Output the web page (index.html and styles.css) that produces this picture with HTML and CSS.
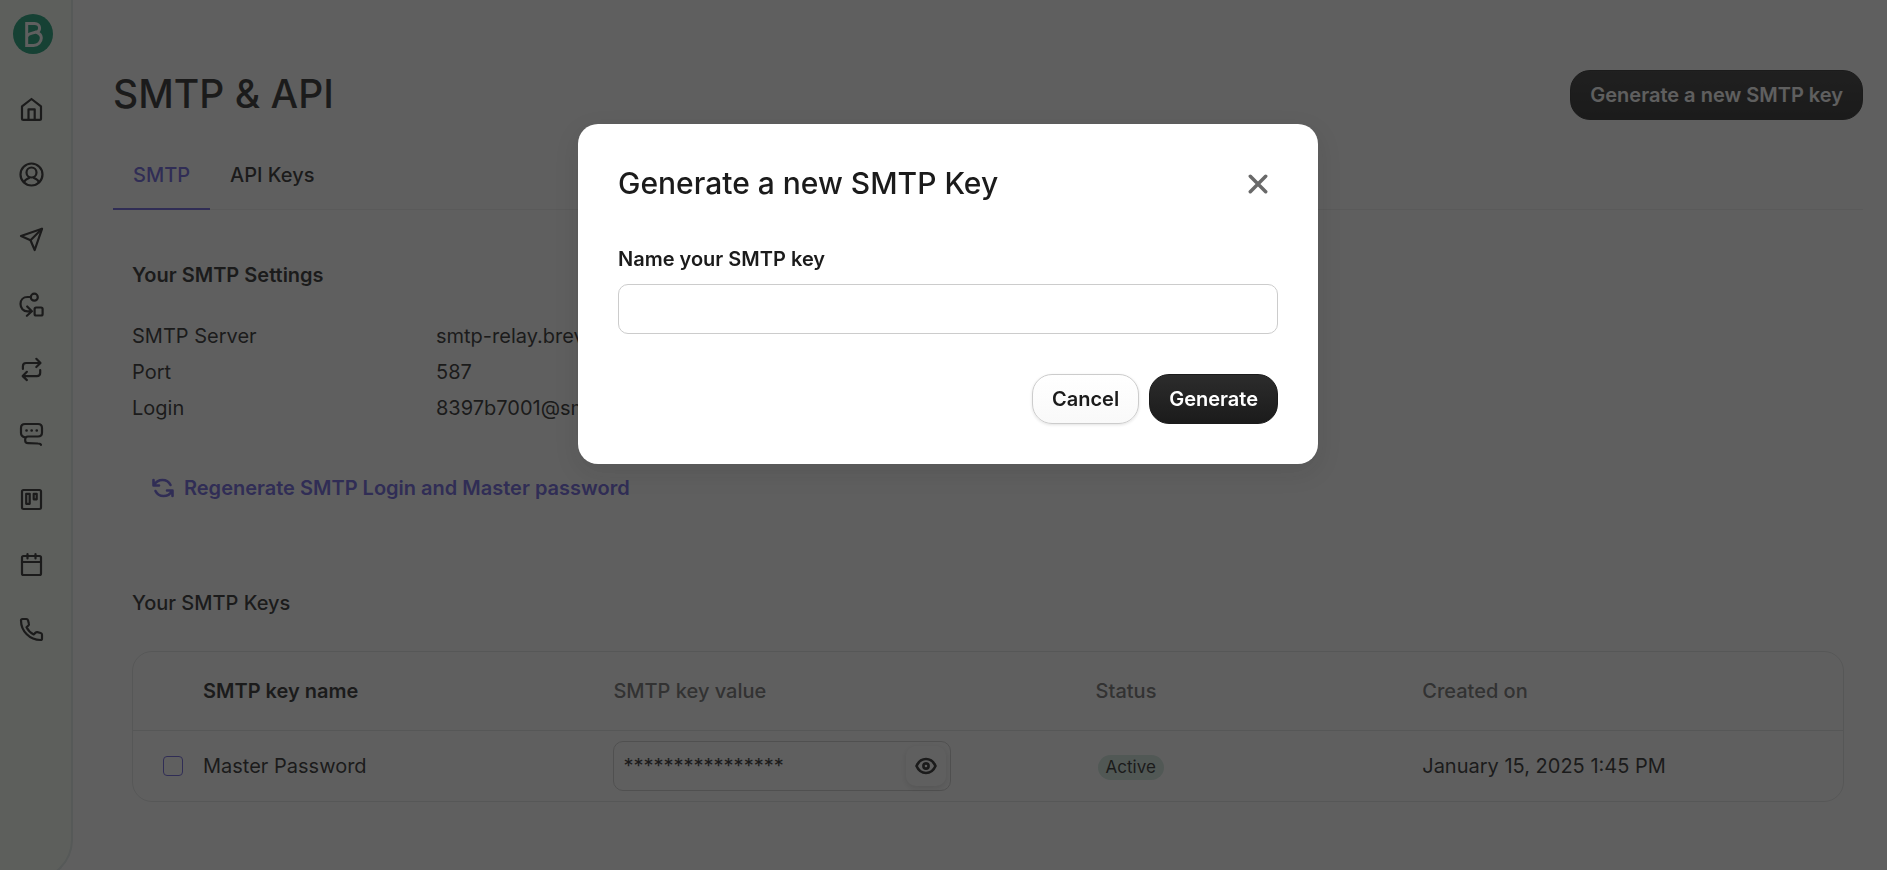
FILE: index.html
```html
<!DOCTYPE html>
<html lang="en">
<head>
    <meta charset="UTF-8">
    <meta name="viewport" content="width=device-width, initial-scale=1.0">
    <title>SMTP &amp; API</title>
    <link rel="stylesheet" href="styles.css">
</head>
<body>
    <div class="app">
        <nav class="sidebar" aria-label="Main">
            <a class="logo" href="#" aria-label="Dashboard">
                <svg viewBox="0 0 40 40" width="40" height="40">
                    <circle cx="20" cy="20" r="20" fill="#0b996e" stroke="none"/>
                    <path d="M13.700 31.400V9.600h7.800c3.200 0 5.100 1.900 5.100 4.500 0 1.900-.9 3.300-2.600 4.400 2.700 1 4.300 3 4.300 5.600 0 4-3.300 7.300-7.800 7.300zM13.800 22.600c.8-2.300 2.400-2.900 5.400-3.500 2.200-.4 3.800-1 4.900-1.700" fill="none" stroke="#fff" stroke-width="3" stroke-linecap="butt" stroke-linejoin="miter"/>
                </svg>
            </a>
            <a class="nav-item" href="#" aria-label="Home">
                <svg viewBox="0 0 25 25"><path d="M3 9.300v12.200c0 .8.6 1.400 1.400 1.400h16.200c.8 0 1.400-.6 1.400-1.400V9.300L12.500 2z"/><path d="M9.500 22.500V12.300h6.200v10.200"/></svg>
            </a>
            <a class="nav-item" href="#" aria-label="Contacts">
                <svg viewBox="0 0 25 25"><circle cx="12.500" cy="12.500" r="11"/><circle cx="12.500" cy="10.500" r="5"/><path d="M4.800 20.200c1.300-2.800 3.300-3.600 5.700-4.500M20.200 20.200c-1.300-2.800-3.300-3.600-5.700-4.500"/></svg>
            </a>
            <a class="nav-item" href="#" aria-label="Campaigns">
                <svg viewBox="0 0 25 25"><path d="M23 1.800L2 9l9.500 4.200L15.700 23z"/><path d="M23 1.800L11.500 13.200"/></svg>
            </a>
            <a class="nav-item" href="#" aria-label="Automations">
                <svg viewBox="0 0 25 25"><circle cx="15.300" cy="5.200" r="3.500"/><path d="M11.800 5H8.500C4.300 5 1.500 8 1.500 12s2.800 7.300 7 7.300H12M8.200 14.500l4.700 4.800-5 4.500"/><rect x="15.600" y="15.500" width="8" height="8" rx="1.500"/></svg>
            </a>
            <a class="nav-item" href="#" aria-label="Transactional">
                <svg viewBox="0 0 25 25"><path d="M3.900 12V9.300c0-2 1.300-3.300 3.300-3.300H21M17.300 1.800L21.500 6l-4.200 4M21.200 13v2.800c0 2-1.300 3.300-3.300 3.300H4M7.900 14.800l-4.200 4.300 4.200 4"/></svg>
            </a>
            <a class="nav-item" href="#" aria-label="Conversations">
                <svg viewBox="0 0 25 25"><path d="M6 15.300C3.500 14.800 2 13.300 2 11V6c0-2.500 1.500-4 4-4h13c2.500 0 4 1.500 4 4v4.500c0 2.500-1.500 4-4 4H9c-2.300 0-2.800 1-2.800 2.800v1.200c0 1.900.8 2.700 2.800 2.700l10 .3c1.700 0 2.700.3 3 1.400"/><path d="M7.500 8.500h.1M12.600 8.500h.1M17.700 8.500h.1" stroke-width="2.600"/></svg>
            </a>
            <a class="nav-item" href="#" aria-label="Deals">
                <svg viewBox="0 0 25 25"><rect x="3" y="3" width="19" height="19" rx="1.500"/><rect x="7.200" y="6.800" width="3.500" height="10"/><rect x="14.700" y="6.800" width="3" height="5.500"/></svg>
            </a>
            <a class="nav-item" href="#" aria-label="Meetings">
                <svg viewBox="0 0 25 25"><rect x="3" y="4" width="19" height="19" rx="1.500"/><path d="M3 10h19M8.500 2v4.500M16.500 2v4.500"/></svg>
            </a>
            <a class="nav-item" href="#" aria-label="Phone">
                <svg viewBox="0 0 25 25"><path d="M2 3.500C2 2.500 2.700 2 3.500 2H7.300c.9 0 1.500.5 1.700 1.300l.9 3.500c.2.700 0 1.200-.5 1.700L7.500 10.300c1.600 3.200 4 5.600 7.200 7.200l1.900-1.900c.5-.5 1-.6 1.700-.5l3.400.9c.8.200 1.300.8 1.300 1.700v3.800c0 .9-.6 1.500-1.500 1.500C10.800 23 2 14.200 2 3.500z"/></svg>
            </a>
        </nav>

        <main class="content">
            <header class="page-header">
                <h1>SMTP &amp; API</h1>
                <button type="button" class="btn btn-primary">Generate a new SMTP key</button>
            </header>

            <div class="tabs" role="tablist">
                <button type="button" class="tab active" role="tab" aria-selected="true">SMTP</button>
                <button type="button" class="tab" role="tab" aria-selected="false">API Keys</button>
            </div>

            <section class="settings">
                <h2>Your SMTP Settings</h2>
                <dl class="settings-list">
                    <dt>SMTP Server</dt>
                    <dd>smtp-relay.brevo.com</dd>
                    <dt>Port</dt>
                    <dd>587</dd>
                    <dt>Login</dt>
                    <dd>8397b7001@smtp-brevo.com</dd>
                </dl>
                <button type="button" class="btn-link">
                    <svg viewBox="0 0 22 20" width="22" height="20"><path d="M1.500 2v5.500H7M20.500 18v-5.500H15M2 7.200C3.800 3.800 6.800 2 10.500 2c3.600 0 6.500 1.800 8 5M20 12.800c-1.800 3.400-4.800 5.200-8.500 5.200-3.600 0-6.500-1.800-8-5"/></svg>
                    Regenerate SMTP Login and Master password
                </button>
            </section>

            <section class="keys">
                <h2>Your SMTP Keys</h2>
                <div class="table-wrap">
                    <table>
                        <thead>
                            <tr>
                                <th class="col-check"></th>
                                <th class="col-name">SMTP key name</th>
                                <th class="col-value">SMTP key value</th>
                                <th class="col-status">Status</th>
                                <th>Created on</th>
                            </tr>
                        </thead>
                        <tbody>
                            <tr>
                                <td class="col-check"><input type="checkbox" class="checkbox" aria-label="Select Master Password"></td>
                                <td>Master Password</td>
                                <td>
                                    <div class="secret">
                                        <input type="text" value="****************" aria-label="SMTP key value" readonly>
                                        <button type="button" class="reveal" aria-label="Show key">
                                            <svg viewBox="0 0 22 18" width="22" height="18"><path d="M1.500 9C3.500 4.500 6.800 2 11 2s7.500 2.500 9.500 7c-2 4.500-5.300 7-9.500 7s-7.500-2.500-9.500-7z"/><circle cx="11" cy="9" r="2.600"/></svg>
                                        </button>
                                    </div>
                                </td>
                                <td><span class="badge">Active</span></td>
                                <td>January 15, 2025 1:45 PM</td>
                            </tr>
                        </tbody>
                    </table>
                </div>
            </section>
        </main>
    </div>

    <div class="overlay">
        <form class="modal" role="dialog" aria-modal="true" aria-labelledby="modalTitle">
            <div class="modal-header">
                <h2 id="modalTitle">Generate a new SMTP Key</h2>
                <button type="button" class="close" aria-label="Close">
                    <svg viewBox="0 0 20 20" width="20" height="20"><path d="M2.300 2.300l15.400 15.400M17.700 2.300L2.300 17.700"/></svg>
                </button>
            </div>
            <label for="keyName">Name your SMTP key</label>
            <input type="text" id="keyName">
            <div class="modal-actions">
                <button type="button" class="btn btn-secondary">Cancel</button>
                <button type="button" class="btn btn-primary">Generate</button>
            </div>
        </form>
    </div>
</body>
</html>
```
FILE: styles.css
```css
* {
    box-sizing: border-box;
}
body {
    margin: 0;
    font-family: Inter, "Liberation Sans", sans-serif;
    font-size: 20px;
    line-height: 30px;
    color: #1b1b1b;
    background: #fff;
}
h1, h2, dl, dd {
    margin: 0;
}
button, input {
    font: inherit;
    color: inherit;
}
button {
    cursor: pointer;
}
svg {
    display: block;
    fill: none;
    stroke: currentColor;
    stroke-width: 2.2;
    stroke-linecap: round;
    stroke-linejoin: round;
}

.app {
    display: flex;
    min-height: 100vh;
    overflow: hidden;
}

/* sidebar */
.sidebar {
    flex: none;
    width: 73px;
    margin-bottom: -10px;
    padding: 14px 0 0 13px;
    display: flex;
    flex-direction: column;
    gap: 40px;
    background: #f9fff5;
    border-right: 2px solid #dfe9e6;
    border-bottom: 2px solid #dfe9e6;
    border-bottom-right-radius: 40px;
}
.logo {
    width: 40px;
    height: 40px;
    margin-bottom: 3px;
}
.nav-item {
    width: 25px;
    height: 25px;
    margin-left: 6px;
    color: #1b1b1b;
}

/* page */
.content {
    flex: 1;
    padding: 70px 24px 40px 40px;
}
.page-header {
    display: flex;
    justify-content: space-between;
    align-items: flex-start;
}
h1 {
    font-size: 39px;
    font-weight: 500;
    line-height: 48px;
}
h2 {
    font-size: 20px;
    font-weight: 600;
    line-height: 30px;
}
.btn {
    height: 50px;
    padding: 0 19px;
    border: 1px solid #1b1b1b;
    border-radius: 20px;
    font-weight: 600;
}
.btn-primary {
    color: #fff;
    background: linear-gradient(#2c2c2c, #1b1b1b);
}
.btn-secondary {
    border-color: #ccc;
    background: linear-gradient(#fff, #f9f9f9);
    box-shadow: 0 1px 3px rgba(27, 27, 27, 0.12);
}
.tabs {
    display: flex;
    margin-top: 20px;
    box-shadow: inset 0 -1px #ededed;
}
.tab {
    height: 70px;
    padding: 2px 20px 0;
    border: 0;
    border-bottom: 2px solid transparent;
    background: none;
    font-weight: 500;
}
.tab.active {
    color: #6358de;
    border-bottom-color: #6358de;
}

.settings {
    padding: 50px 19px 0;
}
.settings-list {
    display: grid;
    grid-template-columns: 304px 1fr;
    margin-top: 28px;
    line-height: 36px;
}
.btn-link {
    display: flex;
    align-items: center;
    gap: 10px;
    height: 50px;
    margin-top: 37px;
    padding: 0 20px;
    border: 0;
    background: none;
    color: #6358de;
    font-weight: 600;
}
.btn-link svg {
    stroke-width: 2.6;
}

.keys {
    padding: 75px 19px 0;
}
.keys h2 {
    font-weight: 500;
}
.table-wrap {
    margin-top: 33px;
    border: 1px solid #e2e4e4;
    border-radius: 20px;
}
table {
    width: 100%;
    table-layout: fixed;
    border-collapse: separate;
    border-spacing: 0;
}
th, td {
    padding: 0 20px;
    text-align: left;
}
th {
    height: 79px;
    border-bottom: 1px solid #e2e4e4;
    color: #696969;
    font-weight: 500;
}
td {
    height: 70px;
}
.col-check {
    width: 50px;
    padding: 0 0 0 30px;
}
.col-name {
    width: 24%;
    color: #1b1b1b;
    font-weight: 600;
}
.col-value {
    width: 28.2%;
}
.col-status {
    width: 19.1%;
}
.checkbox {
    display: block;
    width: 20px;
    height: 20px;
    margin: 0;
    appearance: none;
    border: 1px solid #6358de;
    border-radius: 4px;
}
.secret {
    display: flex;
    align-items: center;
    width: 338px;
    height: 50px;
    padding: 0 4px 0 9px;
    border: 1px solid #ccc;
    border-radius: 10px;
}
.secret input {
    flex: 1;
    min-width: 0;
    padding: 0;
    border: 0;
    background: none;
}
.reveal {
    display: flex;
    align-items: center;
    justify-content: center;
    width: 40px;
    height: 40px;
    padding: 0;
    border: 0;
    border-radius: 10px;
    background: #fff;
    box-shadow: 0 2px 6px rgba(27, 27, 27, 0.15);
}
.reveal svg {
    stroke-width: 2.6;
}
.badge {
    display: inline-block;
    margin-left: 2px;
    padding: 0 8px;
    border-radius: 13px;
    background: #cfe8de;
    font-size: 17px;
    line-height: 25px;
}

/* dialog */
.overlay {
    position: fixed;
    inset: 0;
    display: flex;
    justify-content: center;
    align-items: flex-start;
    padding: 124px 0 0 9px;
    background: rgba(27, 27, 27, 0.7);
}
.modal {
    width: 740px;
    padding: 40px;
    border-radius: 20px;
    background: #fff;
    box-shadow: 0 8px 25px rgba(27, 27, 27, 0.12);
}
.modal-header {
    display: flex;
    justify-content: space-between;
    align-items: flex-start;
    height: 40px;
    margin-bottom: 40px;
}
.modal-header h2 {
    font-size: 30px;
    font-weight: 500;
    line-height: 38px;
}
.close {
    display: flex;
    align-items: center;
    justify-content: center;
    width: 40px;
    height: 40px;
    padding: 0;
    border: 0;
    background: none;
    color: #696969;
}
.close svg {
    stroke-width: 3.5;
}
.modal label {
    display: block;
    margin-bottom: 10px;
    font-weight: 600;
}
.modal input {
    display: block;
    width: 100%;
    height: 50px;
    padding: 0 10px;
    border: 1px solid #ccc;
    border-radius: 10px;
}
.modal-actions {
    display: flex;
    justify-content: flex-end;
    gap: 10px;
    margin-top: 40px;
}
```
